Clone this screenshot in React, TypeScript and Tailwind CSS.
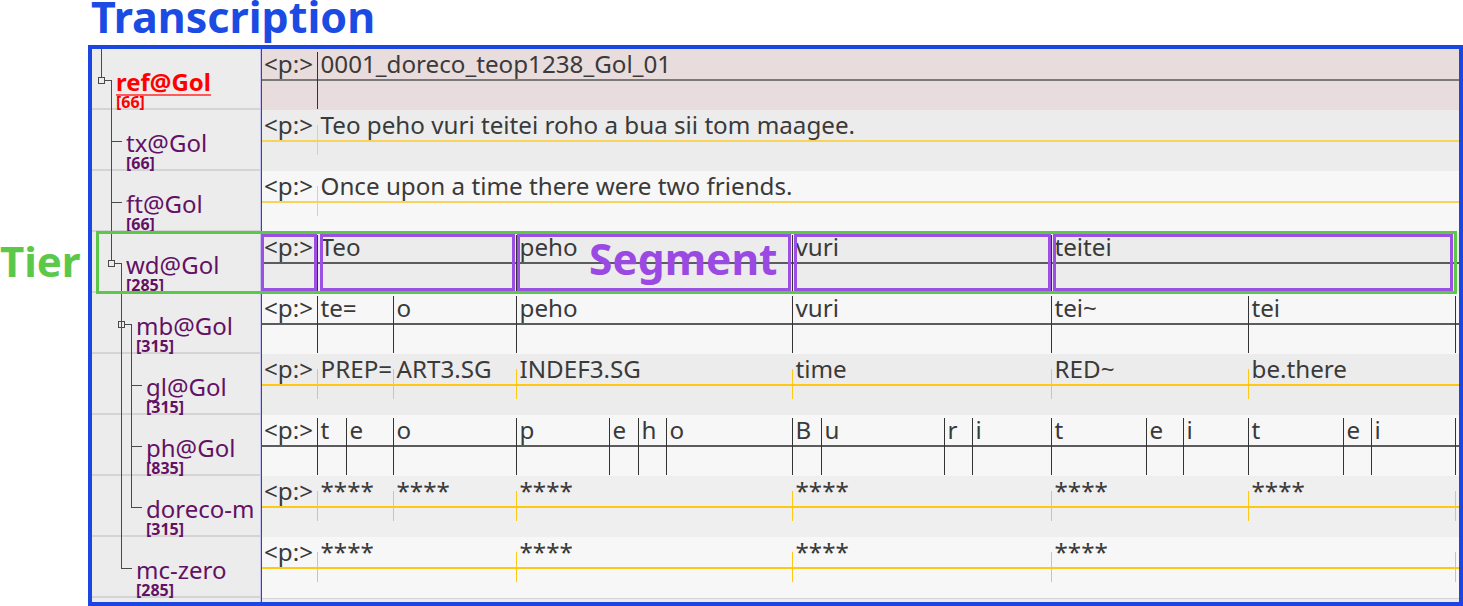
import React from 'react';

type Seg = { x: number; t: string };
type Row = {
  name: string;
  count: string;
  level: number;
  isRef?: boolean;
  bg: string;
  kind: 'dark' | 'yellow';
  line: string;
  tick: string;
  segs: Seg[];
  end?: number;
  endMark?: boolean;
};

const DATA_LEFT = 262;
const P_END = 317;

const words = (xs: number[], ts: string[]): Seg[] => xs.map((x, i) => ({ x, t: ts[i] }));

const ROWS: Row[] = [
  {
    name: 'ref@Gol', count: '[66]', level: 0, isRef: true, bg: 'bg-[#e9dcdc]', kind: 'dark',
    line: 'bg-[#7a7a7a]', tick: 'bg-[#333333]',
    segs: [{ x: 317, t: '0001_doreco_teop1238_Gol_01' }],
  },
  {
    name: 'tx@Gol', count: '[66]', level: 1, bg: 'bg-[#ececec]', kind: 'yellow',
    line: 'bg-[#f8d35c]', tick: 'bg-[#f8d35c]',
    segs: [{ x: 317, t: 'Teo peho vuri teitei roho a bua sii tom maagee.' }],
  },
  {
    name: 'ft@Gol', count: '[66]', level: 1, bg: 'bg-[#f7f7f7]', kind: 'yellow',
    line: 'bg-[#f8d35c]', tick: 'bg-[#f8d35c]',
    segs: [{ x: 317, t: 'Once upon a time there were two friends.' }],
  },
  {
    name: 'wd@Gol', count: '[285]', level: 1, bg: 'bg-[#ececec]', kind: 'dark',
    line: 'bg-[#5c5c5c]', tick: 'bg-[#333333]',
    segs: words([317, 516, 792, 1051], ['Teo', 'peho', 'vuri', 'teitei']),
    end: 1455, endMark: true,
  },
  {
    name: 'mb@Gol', count: '[315]', level: 2, bg: 'bg-[#f7f7f7]', kind: 'dark',
    line: 'bg-[#5c5c5c]', tick: 'bg-[#333333]',
    segs: words([317, 393, 516, 792, 1051, 1248], ['te=', 'o', 'peho', 'vuri', 'tei~', 'tei']),
    end: 1455, endMark: true,
  },
  {
    name: 'gl@Gol', count: '[315]', level: 3, bg: 'bg-[#ececec]', kind: 'yellow',
    line: 'bg-[#ffc814]', tick: 'bg-[#ffc814]',
    segs: words([317, 393, 516, 792, 1051, 1248], ['PREP=', 'ART3.SG', 'INDEF3.SG', 'time', 'RED~', 'be.there']),
  },
  {
    name: 'ph@Gol', count: '[835]', level: 3, bg: 'bg-[#f7f7f7]', kind: 'dark',
    line: 'bg-[#5c5c5c]', tick: 'bg-[#333333]',
    segs: words(
      [317, 346, 393, 516, 609, 638, 666, 792, 821, 944, 972, 1051, 1146, 1183, 1248, 1343, 1371],
      ['t', 'e', 'o', 'p', 'e', 'h', 'o', 'B', 'u', 'r', 'i', 't', 'e', 'i', 't', 'e', 'i']
    ),
    end: 1455, endMark: true,
  },
  {
    name: 'doreco-m', count: '[315]', level: 3, bg: 'bg-[#efefef]', kind: 'yellow',
    line: 'bg-[#ffc814]', tick: 'bg-[#ffc814]',
    segs: words([317, 393, 516, 792, 1051, 1248], ['****', '****', '****', '****', '****', '****']),
    end: 1455, endMark: true,
  },
  {
    name: 'mc-zero', count: '[285]', level: 2, bg: 'bg-[#f7f7f7]', kind: 'yellow',
    line: 'bg-[#ffc814]', tick: 'bg-[#ffc814]',
    segs: words([317, 516, 792, 1051], ['****', '****', '****', '****']),
    end: 1455, endMark: true,
  },
];

const INDENT = ['pl-[24px]', 'pl-[34px]', 'pl-[44px]', 'pl-[54px]'];

function Cell({
  width,
  text,
  mark,
  row,
  first,
}: {
  width?: number;
  text: string;
  mark: boolean;
  row: Row;
  first?: boolean;
}) {
  const markCls =
    row.kind === 'dark'
      ? `absolute left-0 top-[3px] bottom-[1px] w-px ${row.tick}`
      : `absolute left-0 top-[15px] h-[30px] w-px ${row.tick}`;
  return (
    <div
      className={`relative flex flex-col ${width === undefined ? 'flex-1 min-w-0' : 'shrink-0'}`}
      style={width === undefined ? undefined : { width }}
    >
      {mark && <div className={markCls} />}
      <div
        className={`h-[30px] whitespace-nowrap text-[24.2px] leading-[30px] text-[#3a3a3a] ${
          first ? 'pl-[2px]' : 'pl-[3.5px]'
        }`}
      >
        {text}
      </div>
      <div className={`h-[2px] ${row.line}`} />
      <div className="flex-1" />
    </div>
  );
}

function DataRow({ row }: { row: Row }) {
  return (
    <div className={`flex h-[61px] ${row.bg}`}>
      <Cell width={P_END - DATA_LEFT} text="<p:>" mark={false} row={row} first />
      {row.segs.map((s, i) => {
        const next = i + 1 < row.segs.length ? row.segs[i + 1].x : row.end;
        return <Cell key={i} width={next === undefined ? undefined : next - s.x} text={s.t} mark row={row} />;
      })}
      {row.end !== undefined && <Cell text="" mark={!!row.endMark} row={row} />}
    </div>
  );
}

function LabelRow({ row }: { row: Row }) {
  return (
    <div className={`box-border h-[61px] border-b-2 border-[#d4d4d4] ${INDENT[row.level]}`}>
      {row.isRef ? (
        <div className="pt-[21px] text-[24px] font-bold leading-[24px] text-[#ff0000] whitespace-nowrap">
          <span className="underline decoration-[#ff5a5a] decoration-[1.5px] underline-offset-[3px]">{row.name}</span>
        </div>
      ) : (
        <div className="pt-[21px] text-[24px] leading-[24px] text-[#631164] whitespace-nowrap">{row.name}</div>
      )}
      <div
        className={`text-[16px] font-bold leading-[16px] ${row.isRef ? 'text-[#ff0000]' : 'text-[#631164]'}`}
      >
        {row.count}
      </div>
    </div>
  );
}

function Tree() {
  const T0 = 9.5;
  const T1 = 19.5;
  const T2 = 29.5;
  const T3 = 39.5;
  const y = (i: number) => 61 * i + 31.5;
  const stroke = '#4a4a4a';
  const Box = ({ cx, cy }: { cx: number; cy: number }) => (
    <rect x={cx - 3} y={cy - 3} width={6} height={6} fill="none" stroke={stroke} strokeWidth={1} />
  );
  const L = (x1: number, y1: number, x2: number, y2: number) => (
    <line x1={x1} y1={y1} x2={x2} y2={y2} stroke={stroke} strokeWidth={1} />
  );
  return (
    <svg className="pointer-events-none absolute left-0 top-0" width={168} height={553} shapeRendering="crispEdges">
      {L(T0, 0, T0, y(0) - 3)}
      <Box cx={T0} cy={y(0)} />
      {L(T0 + 3, y(0), T1, y(0))}
      {L(T1, y(0), T1, y(3) - 3)}
      {L(T1, y(1), T1 + 10, y(1))}
      {L(T1, y(2), T1 + 10, y(2))}
      <Box cx={T1} cy={y(3)} />
      {L(T1 + 3, y(3), T2, y(3))}
      {L(T2, y(3), T2, y(8))}
      <Box cx={T2} cy={y(4)} />
      {L(T2 + 3, y(4), T3, y(4))}
      {L(T3, y(4), T3, y(7))}
      {L(T3, y(5), T3 + 10, y(5))}
      {L(T3, y(6), T3 + 10, y(6))}
      {L(T3, y(7), T3 + 10, y(7))}
      {L(T2, y(8), T2 + 10, y(8))}
    </svg>
  );
}

export default function App() {
  return (
    <div className="h-[606px] w-[1463px] overflow-hidden bg-white font-['Noto_Sans',sans-serif]">
      <div className="h-[45px] whitespace-nowrap pl-[91px] text-[43px] font-bold leading-[34px] text-[#1b4be3]">
        Transcription
      </div>
      <div className="flex">
        <div className="w-[88px] shrink-0 pt-[199px] text-[42px] font-bold leading-[34px] text-[#5bc84a]">Tier</div>
        <div className="relative box-border h-[561px] w-[1375px] shrink-0 border-4 border-[#1b46e2]">
          <div className="flex h-full">
            <div className="relative box-border w-[169px] shrink-0 overflow-hidden border-r border-[#c3c3ec] bg-[#ececec]">
              {ROWS.map((r) => (
                <LabelRow key={r.name} row={r} />
              ))}
              <Tree />
            </div>
            <div className="box-border flex min-w-0 flex-1 flex-col border-l border-[#ff0000] bg-[#e9e9e9]">
              {ROWS.map((r) => (
                <DataRow key={r.name} row={r} />
              ))}
              <div className="h-[4px] border-t border-[#d4d4d4] bg-[#ececec]" />
            </div>
          </div>

          {/* Tier highlight */}
          <div className="pointer-events-none absolute left-[4px] top-[182px] h-[63px] w-[1361px] border-[3px] border-[#5bc84a]" />
          {/* Segment highlights */}
          <div className="pointer-events-none absolute left-[169px] top-[185px] h-[57px] w-[56px] border-[3px] border-[#9b4fe3]" />
          <div className="pointer-events-none absolute left-[228px] top-[185px] h-[57px] w-[195px] border-[3px] border-[#9b4fe3]" />
          <div className="pointer-events-none absolute left-[425px] top-[185px] h-[57px] w-[274px] border-[3px] border-[#9b4fe3]" />
          <div className="pointer-events-none absolute left-[702px] top-[185px] h-[57px] w-[257px] border-[3px] border-[#9b4fe3]" />
          <div className="pointer-events-none absolute left-[961px] top-[185px] h-[57px] w-[400px] border-[3px] border-[#9b4fe3]" />
          <div className="pointer-events-none absolute left-[497px] top-[193px] whitespace-nowrap text-[42.5px] font-bold leading-[34px] text-[#9a4ae2]">
            Segment
          </div>
        </div>
      </div>
    </div>
  );
}
